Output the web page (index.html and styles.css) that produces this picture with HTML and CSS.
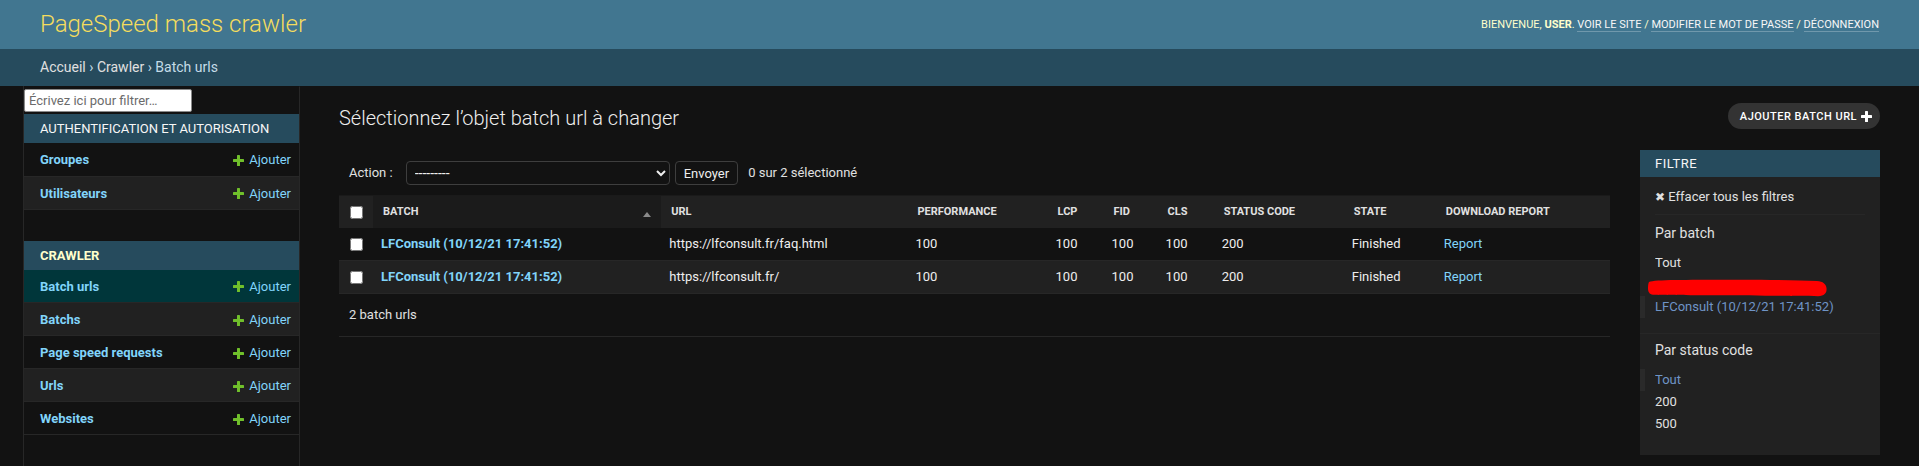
FILE: index.html
```html
<!DOCTYPE html>
<html lang="fr">
<head>
<meta charset="utf-8">
<title>Sélectionnez l'objet batch url à changer</title>
<link rel="stylesheet" href="styles.css">
</head>
<body>
<div class="header">
  <h1 class="site-name">PageSpeed mass crawler</h1>
  <div class="user-tools">Bienvenue, <strong>user</strong>. <a href="#">Voir le site</a> / <a href="#">Modifier le mot de passe</a> / <a href="#">Déconnexion</a></div>
</div>
<div class="breadcrumbs"><a href="#">Accueil</a> › <a href="#">Crawler</a> › Batch urls</div>
<div class="main">
  <button class="sidebar-toggle" aria-label="Basculer la barre latérale"></button>
  <nav class="sidebar">
    <input class="nav-filter" type="search" placeholder="Écrivez ici pour filtrer…">
    <table class="app-module">
      <caption>Authentification et autorisation</caption>
      <tbody>
        <tr><th><a href="#">Groupes</a></th><td><a class="addlink" href="#"><svg class="plus" viewBox="0 0 11 11"><rect x="4" y="0" width="3" height="11" rx="0.6"/><rect x="0" y="4" width="11" height="3" rx="0.6"/></svg>Ajouter</a></td></tr>
        <tr><th><a href="#">Utilisateurs</a></th><td><a class="addlink" href="#"><svg class="plus" viewBox="0 0 11 11"><rect x="4" y="0" width="3" height="11" rx="0.6"/><rect x="0" y="4" width="11" height="3" rx="0.6"/></svg>Ajouter</a></td></tr>
      </tbody>
    </table>
    <table class="app-module current-app">
      <caption>Crawler</caption>
      <tbody>
        <tr class="current-model"><th><a href="#">Batch urls</a></th><td><a class="addlink" href="#"><svg class="plus" viewBox="0 0 11 11"><rect x="4" y="0" width="3" height="11" rx="0.6"/><rect x="0" y="4" width="11" height="3" rx="0.6"/></svg>Ajouter</a></td></tr>
        <tr><th><a href="#">Batchs</a></th><td><a class="addlink" href="#"><svg class="plus" viewBox="0 0 11 11"><rect x="4" y="0" width="3" height="11" rx="0.6"/><rect x="0" y="4" width="11" height="3" rx="0.6"/></svg>Ajouter</a></td></tr>
        <tr><th><a href="#">Page speed requests</a></th><td><a class="addlink" href="#"><svg class="plus" viewBox="0 0 11 11"><rect x="4" y="0" width="3" height="11" rx="0.6"/><rect x="0" y="4" width="11" height="3" rx="0.6"/></svg>Ajouter</a></td></tr>
        <tr><th><a href="#">Urls</a></th><td><a class="addlink" href="#"><svg class="plus" viewBox="0 0 11 11"><rect x="4" y="0" width="3" height="11" rx="0.6"/><rect x="0" y="4" width="11" height="3" rx="0.6"/></svg>Ajouter</a></td></tr>
        <tr><th><a href="#">Websites</a></th><td><a class="addlink" href="#"><svg class="plus" viewBox="0 0 11 11"><rect x="4" y="0" width="3" height="11" rx="0.6"/><rect x="0" y="4" width="11" height="3" rx="0.6"/></svg>Ajouter</a></td></tr>
      </tbody>
    </table>
  </nav>
  <div class="content">
    <div class="content-head">
      <h1>Sélectionnez l’objet batch url à changer</h1>
      <a class="add-btn" href="#">Ajouter batch url <svg class="tool-plus" viewBox="0 0 11 11"><rect x="4" y="0" width="3" height="11" rx="0.6"/><rect x="0" y="4" width="11" height="3" rx="0.6"/></svg></a>
    </div>
    <div class="changelist">
      <div class="changelist-form">
        <div class="actions">
          <label>Action :</label>
          <select><option>---------</option></select>
          <button class="button" type="button">Envoyer</button>
          <span class="action-counter">0 sur 2 sélectionné</span>
        </div>
        <table class="results">
          <colgroup>
            <col class="c-cb"><col class="c-batch"><col class="c-url"><col class="c-perf"><col class="c-lcp"><col class="c-fid"><col class="c-cls"><col class="c-status"><col class="c-state"><col class="c-report">
          </colgroup>
          <thead>
            <tr>
              <th class="cb"><input type="checkbox"></th>
              <th class="sorted"><span class="th-inner">Batch<svg class="sort-arrow" viewBox="0 0 8 5"><path d="M0 5 L4 0 L8 5 Z"/></svg></span></th>
              <th>Url</th>
              <th>Performance</th>
              <th>LCP</th>
              <th>FID</th>
              <th>CLS</th>
              <th>Status code</th>
              <th>State</th>
              <th>Download report</th>
            </tr>
          </thead>
          <tbody>
            <tr>
              <td class="cb"><input type="checkbox"></td>
              <td><a class="strong" href="#">LFConsult (10/12/21 17:41:52)</a></td>
              <td>https://lfconsult.fr/faq.html</td>
              <td>100</td><td>100</td><td>100</td><td>100</td><td>200</td>
              <td>Finished</td>
              <td><a href="#">Report</a></td>
            </tr>
            <tr>
              <td class="cb"><input type="checkbox"></td>
              <td><a class="strong" href="#">LFConsult (10/12/21 17:41:52)</a></td>
              <td>https://lfconsult.fr/</td>
              <td>100</td><td>100</td><td>100</td><td>100</td><td>200</td>
              <td>Finished</td>
              <td><a href="#">Report</a></td>
            </tr>
          </tbody>
        </table>
        <p class="paginator">2 batch urls</p>
      </div>
      <div class="filter">
        <h2>Filtre</h2>
        <h3 class="filter-clear"><a href="#"><span class="x-mark">✖</span> Effacer tous les filtres</a></h3>
        <h3>Par batch</h3>
        <ul>
          <li><a href="#">Tout</a></li>
          <li class="redacted"><svg class="scribble" viewBox="0 0 180 20"><path d="M2 5 C8 2.5 40 3 80 2.8 C120 2.6 150 3.4 170 4 C176 4.4 179 7 179.5 11 C180 15.5 178 19 171 19.2 C150 19 110 18.6 70 18.3 C40 18.1 15 18.2 6 17.8 C2 17.4 0.8 14 1 10.5 C1.1 8 1.4 6 2 5 Z"/></svg></li>
          <li class="selected"><a href="#">LFConsult (10/12/21 17:41:52)</a></li>
        </ul>
        <h3 class="second">Par status code</h3>
        <ul>
          <li class="selected"><a href="#">Tout</a></li>
          <li><a href="#">200</a></li>
          <li><a href="#">500</a></li>
        </ul>
      </div>
    </div>
  </div>
</div>
</body>
</html>
```
FILE: styles.css
```css
* { box-sizing: border-box; }
html, body { margin: 0; padding: 0; }
body {
  font-family: Roboto, "Lucida Grande", "DejaVu Sans", Verdana, Arial, sans-serif;
  font-size: 14px;
  color: #eeeeee;
  background: #121212;
}
a { text-decoration: none; color: #81d4fa; }

/* Header */
.header {
  display: flex;
  justify-content: space-between;
  align-items: center;
  height: 49px;
  padding: 10px 40px;
  background: #417690;
}
.site-name {
  margin: 0;
  font-size: 24px;
  font-weight: 300;
  line-height: 29px;
  color: #f5dd5d;
}
.user-tools {
  font-size: 11px;
  line-height: 14px;
  letter-spacing: 0;
  text-transform: uppercase;
  color: #ffffcc;
}
.user-tools strong { font-weight: 700; }
.user-tools a {
  color: #f7f7f7;
  border-bottom: 1px solid rgba(255, 255, 255, 0.25);
}

/* Breadcrumbs */
.breadcrumbs {
  height: 37px;
  padding: 10px 40px;
  background: #264b5d;
  font-size: 14px;
  line-height: 17px;
  color: #c4dce8;
}
.breadcrumbs a { color: #e0e0e0; }

/* Main */
.main {
  display: flex;
  min-height: calc(100vh - 86px);
}
.sidebar-toggle {
  flex: 0 0 24px;
  padding: 0;
  border: 0;
  border-right: 1px solid #272727;
  background: #121212;
}
.sidebar {
  flex: 0 0 276px;
  border-top: 1px solid transparent;
  border-right: 1px solid #272727;
}
.nav-filter {
  display: block;
  width: 168px;
  height: 23px;
  margin: 2px 0;
  padding: 2px 4px;
  border: 1px solid #8a8a8a;
  border-radius: 2px;
  background: #ffffff;
  color: #333;
  font-family: Roboto, "DejaVu Sans", sans-serif;
  font-size: 13px;
  -webkit-appearance: none;
  appearance: none;
}
.nav-filter::placeholder { color: #6b6b6b; }

.app-module {
  width: 100%;
  border-collapse: collapse;
  margin-bottom: 31px;
}
.app-module caption {
  caption-side: top;
  text-align: left;
  padding: 8px 8px 8px 16px;
  background: #264b5d;
  color: #f7f7f7;
  font-size: 13px;
  line-height: 13px;
  font-weight: 400;
  text-transform: uppercase;
}
.current-app caption { color: #ffffcc; font-weight: 700; }
.app-module tr { border-bottom: 1px solid #272727; }
.app-module tr:nth-child(even) { background: #212121; }
.app-module tr.current-model { background: #00363a; }
.app-module th {
  width: 100%;
  height: 33px;
  padding: 9px 8px 7px 16px;
  text-align: left;
  font-size: 13px;
  line-height: 16px;
  font-weight: 700;
}
.app-module td {
  padding: 9px 8px 7px;
  white-space: nowrap;
  font-size: 13px;
  line-height: 16px;
}
.addlink {
  display: flex;
  justify-content: flex-end;
  align-items: center;
  height: 16px;
}
.plus {
  flex: 0 0 11px;
  width: 11px;
  height: 11px;
  margin-right: 5px;
  fill: #70bf2b;
}

/* Content */
.content {
  flex: 1;
  min-width: 0;
  padding: 20px 39px;
}
.content-head {
  display: flex;
  justify-content: space-between;
  align-items: flex-start;
  margin-bottom: 20px;
}
.content-head h1 {
  margin: 0;
  font-size: 20px;
  font-weight: 300;
  line-height: 24px;
  color: #eeeeee;
}
.add-btn {
  display: flex;
  align-items: center;
  height: 26px;
  margin-top: -3px;
  padding: 0 8px 0 12px;
  border-radius: 15px;
  background: #333333;
  color: #ffffff;
  font-size: 11px;
  font-weight: 500;
  letter-spacing: 0.5px;
  text-transform: uppercase;
}
.tool-plus {
  width: 11px;
  height: 11px;
  margin-left: 4px;
  fill: #ffffff;
}

.changelist {
  display: flex;
  align-items: flex-start;
}
.changelist-form {
  flex: 1;
  min-width: 0;
}

/* Actions */
.actions {
  display: flex;
  align-items: center;
  padding: 11px 10px 10px;
  font-size: 13px;
  line-height: 24px;
  color: #e0e0e0;
}
.actions select {
  width: 264px;
  height: 24px;
  margin: 0 0 0 13px;
  padding: 0 0 0 4px;
  border: 1px solid #3e3e3e;
  border-radius: 4px;
  background: #121212;
  color: #eeeeee;
  font-family: Roboto, "DejaVu Sans", sans-serif;
  font-size: 14px;
  color-scheme: dark;
}
.actions .button {
  height: 24px;
  margin: 0 0 0 5px;
  padding: 4px 8px;
  border: 1px solid #3e3e3e;
  border-radius: 4px;
  background: #121212;
  color: #eeeeee;
  font-family: Roboto, "DejaVu Sans", sans-serif;
  font-size: 13px;
  line-height: 1;
}
.action-counter { margin-left: 10px; }

/* Results table */
.results {
  width: 100%;
  border-collapse: collapse;
  table-layout: fixed;
}
.c-cb { width: 34px; }
.c-batch { width: 288px; }
.c-url { width: 246px; }
.c-perf { width: 140px; }
.c-lcp { width: 56px; }
.c-fid { width: 54px; }
.c-cls { width: 56px; }
.c-status { width: 130px; }
.c-state { width: 92px; }
.c-report { width: 174px; }

.results th {
  padding: 8px 10px;
  border-top: 1px solid #1a1a1a;
  background: #212121;
  color: #e0e0e0;
  font-size: 11px;
  line-height: 16px;
  font-weight: 700;
  text-align: left;
  text-transform: uppercase;
  white-space: nowrap;
  vertical-align: middle;
}
.results th.sorted { background: #1b1b1b; }
.th-inner {
  display: flex;
  justify-content: space-between;
  align-items: center;
}
.sort-arrow {
  width: 8px;
  height: 5px;
  margin-top: 4px;
  fill: #8a8a8a;
}
.results td {
  padding: 8px;
  font-size: 13px;
  line-height: 16px;
  border-bottom: 1px solid #272727;
  vertical-align: middle;
  white-space: nowrap;
  overflow: hidden;
}
.results tbody tr:nth-child(even) { background: #212121; }
.results .cb {
  padding: 8px 0;
  text-align: center;
}
.results .cb input {
  display: block;
  width: 13px;
  height: 13px;
  margin: 0 auto;
}
.strong { font-weight: 700; }

.paginator {
  margin: 0;
  padding: 10px;
  font-size: 13px;
  line-height: 22px;
  color: #e0e0e0;
  border-bottom: 1px solid #272727;
}

/* Filter */
.filter {
  flex: 0 0 240px;
  margin-left: 30px;
  padding-bottom: 5px;
  background: #212121;
}
.filter h2 {
  margin: 0 0 12px;
  padding: 5px 15px;
  background: #264b5d;
  color: #f7f7f7;
  font-size: 13px;
  line-height: 17px;
  font-weight: 400;
  letter-spacing: 0.5px;
  text-transform: uppercase;
}
.filter h3 {
  margin: 0 0 10px;
  padding: 0 15px;
  font-size: 14px;
  line-height: 17px;
  font-weight: 400;
  color: #e0e0e0;
}
.filter h3.filter-clear {
  margin: 0 15px 10px;
  padding: 0 0 9px;
  border-bottom: 1px solid #272727;
  font-size: 13px;
  line-height: 16px;
}
.filter-clear a { color: #e0e0e0; }
.x-mark { font-family: "DejaVu Sans", sans-serif; font-size: 12px; }
.filter h3.second { margin-top: 8px; }
.filter ul {
  margin: 0;
  padding: 0 15px 15px;
  list-style: none;
  border-bottom: 1px solid #272727;
}
.filter ul:last-child { border-bottom: none; }
.filter li {
  padding: 1px 0;
  font-size: 13px;
  line-height: 20px;
}
.filter li a {
  display: block;
  color: #e0e0e0;
  overflow: hidden;
  text-overflow: ellipsis;
  white-space: nowrap;
}
.filter li.selected {
  margin-left: -15px;
  padding-left: 10px;
  border-left: 5px solid #2a2a2a;
}
.filter li.selected a { color: #6f94c6; }
.redacted { height: 22px; }
.scribble {
  display: block;
  width: 180px;
  height: 20px;
  margin: 2px 0 0 -8px;
  fill: #ff0000;
}
```
